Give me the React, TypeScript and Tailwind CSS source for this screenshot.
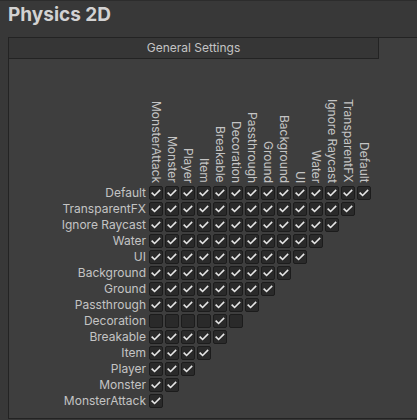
import React from "react";

// layers as shown in the rows (top to bottom); columns are the reverse
const layers = [
  "Default",
  "TransparentFX",
  "Ignore Raycast",
  "Water",
  "UI",
  "Background",
  "Ground",
  "Passthrough",
  "Decoration",
  "Breakable",
  "Item",
  "Player",
  "Monster",
  "MonsterAttack",
];

const columns = [...layers].reverse();

// Decoration ignores everything except Breakable (and the layers above it)
function isChecked(row: string, col: string) {
  if (row === "Decoration" && col !== "Breakable") return false;
  return true;
}

function Check({ on }: { on: boolean }) {
  return (
    <div className="w-[14px] h-[14px] rounded-[2px] border border-[#1c1c1c] bg-[#2a2a2a] flex items-center justify-center">
      {on && (
        <svg width="12" height="12" viewBox="0 0 12 12">
          <path
            d="M2.2 6.2 L4.6 8.5 L9.6 3.4"
            fill="none"
            stroke="#e6e6e6"
            strokeWidth="1.6"
            strokeLinecap="square"
          />
        </svg>
      )}
    </div>
  );
}

export default function App() {
  return (
    <div
      className="w-[417px] h-[420px] overflow-hidden bg-[#383838] border-t border-[#2c2c2c] text-[#c4c4c4]"
      style={{ fontFamily: "Inter, 'Noto Sans', sans-serif" }}
    >
      <div className="h-[36px] pl-2 pt-[2px] text-[19px] leading-[24px] font-bold text-[#d2d2d2]">
        Physics 2D
      </div>

      <div className="ml-2 h-[382px] border-l border-t border-b border-[#232323] bg-[#3e3e3e]">
        {/* tab strip */}
        <div className="flex h-[21px]">
          <div className="w-[370px] h-[21px] bg-[#363636] border-r border-b border-[#232323] flex items-center justify-center text-[12px]">
            General Settings
          </div>
        </div>

        {/* column headers */}
        <div className="flex items-end h-[124px]">
          <div className="w-[139px] shrink-0" />
          {columns.map((c) => (
            <div
              key={c}
              className="w-[16px] shrink-0 text-[12px] leading-[16px] whitespace-nowrap [writing-mode:vertical-rl]"
            >
              {c}
            </div>
          ))}
        </div>

        {/* matrix */}
        <div className="mt-[3px] flex flex-col gap-[2px]">
          {layers.map((row, r) => (
            <div key={row} className="flex items-center h-[14px]">
              <div className="w-[137px] shrink-0 text-right text-[12px] leading-[14px] whitespace-nowrap">
                {row}
              </div>
              <div className="ml-[3px] flex gap-[2px]">
                {columns.slice(0, layers.length - r).map((col) => (
                  <Check key={col} on={isChecked(row, col)} />
                ))}
              </div>
            </div>
          ))}
        </div>
      </div>
    </div>
  );
}
